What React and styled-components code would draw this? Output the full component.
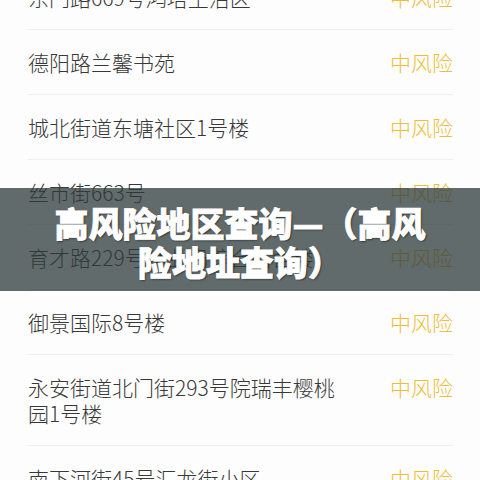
import React from "react";
import styled, { createGlobalStyle } from "styled-components";

const GlobalStyle = createGlobalStyle`
  html, body {
    margin: 0;
    padding: 0;
    background: #fdfdfd;
  }
  body {
    width: 480px;
    height: 480px;
    overflow: hidden;
    font-family: "Noto Sans CJK SC", "Noto Sans", sans-serif;
  }
`;

const places = [
  "东门路669号鸿塔生活区",
  "德阳路兰馨书苑",
  "城北街道东塘社区1号楼",
  "丝市街663号",
  "育才路229号林业局综合宿舍楼",
  "御景国际8号楼",
  "永安街道北门街293号院瑞丰樱桃园1号楼",
  "南下河街45号汇龙街小区",
];

const Page = styled.div`
  position: relative;
  width: 480px;
  height: 480px;
  overflow: hidden;
`;

const List = styled.ul`
  list-style: none;
  margin: -35px 27px 0 28px;
  padding: 0;
`;

const Row = styled.li`
  display: flex;
  justify-content: space-between;
  align-items: flex-start;
  padding: 19px 0 19px;
  border-bottom: 1px solid #efefef;
`;

const Name = styled.span`
  width: 318px;
  font-size: 21px;
  line-height: 26px;
  font-weight: 300;
  color: #383838;
`;

const Risk = styled.span`
  flex-shrink: 0;
  font-size: 21px;
  line-height: 26px;
  font-weight: 300;
  color: #edbe3a;
`;

const Banner = styled.div`
  position: absolute;
  left: 0;
  right: 0;
  top: 188px;
  height: 103px;
  padding-top: 4px;
  box-sizing: border-box;
  display: flex;
  align-items: center;
  justify-content: center;
  background: rgba(45, 58, 57, 0.75);
`;

const Title = styled.h1`
  margin: 0;
  width: 380px;
  text-align: center;
  font-size: 34px;
  line-height: 39px;
  font-weight: 900;
  color: #ffffff;
  -webkit-text-stroke: 0.8px #ffffff;
  text-shadow: 1px 1px 2px rgba(0, 0, 0, 0.6);
`;

export default function App() {
  return (
    <Page>
      <GlobalStyle />
      <List>
        {places.map((p) => (
          <Row key={p}>
            <Name>{p}</Name>
            <Risk>中风险</Risk>
          </Row>
        ))}
      </List>
      <Banner>
        <Title>高风险地区查询—（高风险地址查询）</Title>
      </Banner>
    </Page>
  );
}
